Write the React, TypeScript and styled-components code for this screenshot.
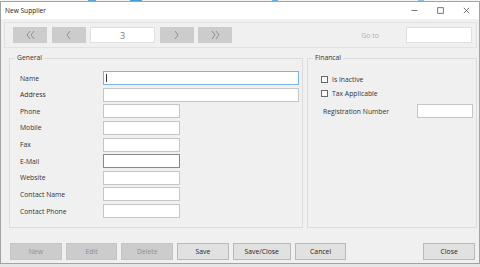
import React from "react";
import styled, { createGlobalStyle } from "styled-components";

const Global = createGlobalStyle`
  html, body { margin: 0; padding: 0; }
  body {
    width: 480px;
    height: 267px;
    overflow: hidden;
    background: #e6e6e6;
    font-family: "Open Sans", "Noto Sans", sans-serif;
  }
  * { box-sizing: border-box; }
`;

const Backdrop = styled.div`
  height: 1px;
  background: linear-gradient(
    90deg,
    #f4f4f4 0 88px, #59a7d8 88px 96px, #f4f4f4 96px 130px, #4aa0d6 130px 142px,
    #f4f4f4 142px 272px, #6ab3de 272px 278px, #f4f4f4 278px 418px, #8cc4e6 418px 424px, #f4f4f4 424px
  );
`;

const Window = styled.div`
  width: 480px;
  height: 263px;
  border: 1px solid #a3a3a3;
  background: #f0f0f0;
  display: flex;
  flex-direction: column;
`;

const TitleBar = styled.div`
  height: 17px;
  background: #ffffff;
  display: flex;
  align-items: center;
  padding-left: 4px;
  font-size: 6.6px;
  color: #222;
`;

const TitleText = styled.span`
  flex: 1;
`;

const WinButton = styled.div`
  width: 26px;
  height: 17px;
  display: flex;
  align-items: center;
  justify-content: center;
`;

const NavBar = styled.div`
  margin: 3px 2px 0 3px;
  height: 26px;
  border: 1px solid #e2e2e2;
  display: flex;
  align-items: center;
  padding: 0 4px 0 8px;
  gap: 4.5px;
`;

const NavButton = styled.div`
  width: 34px;
  height: 16.5px;
  background: #cccccc;
  display: flex;
  align-items: center;
  justify-content: center;
`;

const PageBox = styled.div`
  width: 65px;
  height: 16.5px;
  background: #ffffff;
  border: 1px solid #e0e0e0;
  display: flex;
  align-items: center;
  justify-content: center;
  font-size: 9px;
  color: #7a7a7a;
`;

const GoTo = styled.div`
  margin-left: auto;
  display: flex;
  align-items: center;
  gap: 27px;
  font-size: 7px;
  color: #b0b0b0;
`;

const GoToInput = styled.div`
  width: 66px;
  height: 16.5px;
  background: #ffffff;
  border: 1px solid #e0e0e0;
`;

const Groups = styled.div`
  display: flex;
  gap: 4px;
  margin: 5px 2px 0 8px;
`;

const Group = styled.fieldset<{ $width: number }>`
  margin: 0;
  width: ${(p) => p.$width}px;
  height: 175px;
  border: 1px solid #dcdcdc;
  padding: 8px 3px 0 10px;
  min-width: 0;
`;

const Legend = styled.legend`
  font-size: 6.8px;
  color: #333;
  padding: 0 2px;
  margin-left: -5px;
  line-height: 10px;
`;

const FormGrid = styled.div`
  display: grid;
  grid-template-columns: 83px 1fr;
  grid-auto-rows: 14px;
  row-gap: 2.65px;
  align-items: center;
`;

const Label = styled.div`
  font-size: 6.8px;
  color: #333;
  white-space: nowrap;
`;

const TextBox = styled.div<{ $wide?: boolean; $state?: "focus" | "hover" }>`
  height: 14px;
  width: ${(p) => (p.$wide ? "100%" : "77px")};
  background: #fff;
  border: 1px solid
    ${(p) => (p.$state === "focus" ? "#7ab3e6" : p.$state === "hover" ? "#8a8a8a" : "#c6c6c6")};
  display: flex;
  align-items: center;
  padding-left: 2px;
`;

const Caret = styled.span`
  width: 1px;
  height: 8px;
  background: #333;
`;

const FinStack = styled.div`
  display: flex;
  flex-direction: column;
  padding: 1px 0 0 3px;
`;

const CheckRow = styled.div`
  display: flex;
  align-items: center;
  gap: 4px;
  height: 14.5px;
  font-size: 6.8px;
  color: #333;
`;

const Box = styled.span`
  width: 7px;
  height: 7px;
  border: 1px solid #6a6a6a;
  background: #fff;
`;

const RegRow = styled.div`
  display: flex;
  align-items: center;
  justify-content: space-between;
  height: 14px;
  margin-top: 3px;
  padding-left: 2px;
`;

const SmallBox = styled.div`
  width: 56px;
  height: 14px;
  background: #fff;
  border: 1px solid #c6c6c6;
`;

const Footer = styled.div`
  display: flex;
  gap: 4px;
  margin: 15px 4px 0 9px;
`;

const Btn = styled.div<{ $disabled?: boolean; $w?: number; $push?: boolean }>`
  width: ${(p) => p.$w ?? 51.7}px;
  height: 16.5px;
  margin-left: ${(p) => (p.$push ? "auto" : "0")};
  background: ${(p) => (p.$disabled ? "#cccccc" : "#e1e1e1")};
  border: 1px solid ${(p) => (p.$disabled ? "#c4c4c4" : "#b9b9b9")};
  color: ${(p) => (p.$disabled ? "#8e8e8e" : "#222")};
  font-size: 6.8px;
  display: flex;
  align-items: center;
  justify-content: center;
`;

const Chevron = ({ dir, double }: { dir: "l" | "r"; double?: boolean }) => {
  const one = (x: number) =>
    dir === "l" ? `${x + 3},1 ${x},5 ${x + 3},9` : `${x},1 ${x + 3},5 ${x},9`;
  return (
    <svg width={double ? 9 : 5} height="10" viewBox={`0 0 ${double ? 9 : 5} 10`}>
      <polyline points={one(1)} fill="none" stroke="#8a8a8a" strokeWidth="0.9" />
      {double && <polyline points={one(5)} fill="none" stroke="#8a8a8a" strokeWidth="0.9" />}
    </svg>
  );
};

const fields: { label: string; wide?: boolean; state?: "focus" | "hover" }[] = [
  { label: "Name", wide: true, state: "focus" },
  { label: "Address", wide: true },
  { label: "Phone" },
  { label: "Mobile" },
  { label: "Fax" },
  { label: "E-Mail", state: "hover" },
  { label: "Website" },
  { label: "Contact Name" },
  { label: "Contact Phone" },
];

export default function App() {
  return (
    <>
      <Global />
      <Backdrop />
      <Window>
        <TitleBar>
          <TitleText>New Supplier</TitleText>
          <WinButton>
            <svg width="7" height="7" viewBox="0 0 7 7">
              <line x1="0.5" y1="3.5" x2="6.5" y2="3.5" stroke="#555" strokeWidth="0.8" />
            </svg>
          </WinButton>
          <WinButton>
            <svg width="7" height="7" viewBox="0 0 7 7">
              <rect x="0.7" y="0.7" width="5.6" height="5.6" fill="none" stroke="#555" strokeWidth="0.8" />
            </svg>
          </WinButton>
          <WinButton>
            <svg width="7" height="7" viewBox="0 0 7 7">
              <path d="M0.8 0.8 L6.2 6.2 M6.2 0.8 L0.8 6.2" stroke="#555" strokeWidth="0.8" />
            </svg>
          </WinButton>
        </TitleBar>
        <NavBar>
          <NavButton><Chevron dir="l" double /></NavButton>
          <NavButton><Chevron dir="l" /></NavButton>
          <PageBox>3</PageBox>
          <NavButton><Chevron dir="r" /></NavButton>
          <NavButton><Chevron dir="r" double /></NavButton>
          <GoTo>
            Go to
            <GoToInput />
          </GoTo>
        </NavBar>
        <Groups>
          <Group $width={294}>
            <Legend>General</Legend>
            <FormGrid>
              {fields.map((f) => (
                <React.Fragment key={f.label}>
                  <Label>{f.label}</Label>
                  <TextBox $wide={f.wide} $state={f.state}>
                    {f.state === "focus" && <Caret />}
                  </TextBox>
                </React.Fragment>
              ))}
            </FormGrid>
          </Group>
          <Group $width={170}>
            <Legend>Financal</Legend>
            <FinStack>
              <CheckRow><Box />Is Inactive</CheckRow>
              <CheckRow><Box />Tax Applicable</CheckRow>
              <RegRow>
                <Label>Registration Number</Label>
                <SmallBox />
              </RegRow>
            </FinStack>
          </Group>
        </Groups>
        <Footer>
          <Btn $disabled>New</Btn>
          <Btn $disabled>Edit</Btn>
          <Btn $disabled>Delete</Btn>
          <Btn>Save</Btn>
          <Btn $w={58}>Save/Close</Btn>
          <Btn>Cancel</Btn>
          <Btn $push>Close</Btn>
        </Footer>
      </Window>
    </>
  );
}
